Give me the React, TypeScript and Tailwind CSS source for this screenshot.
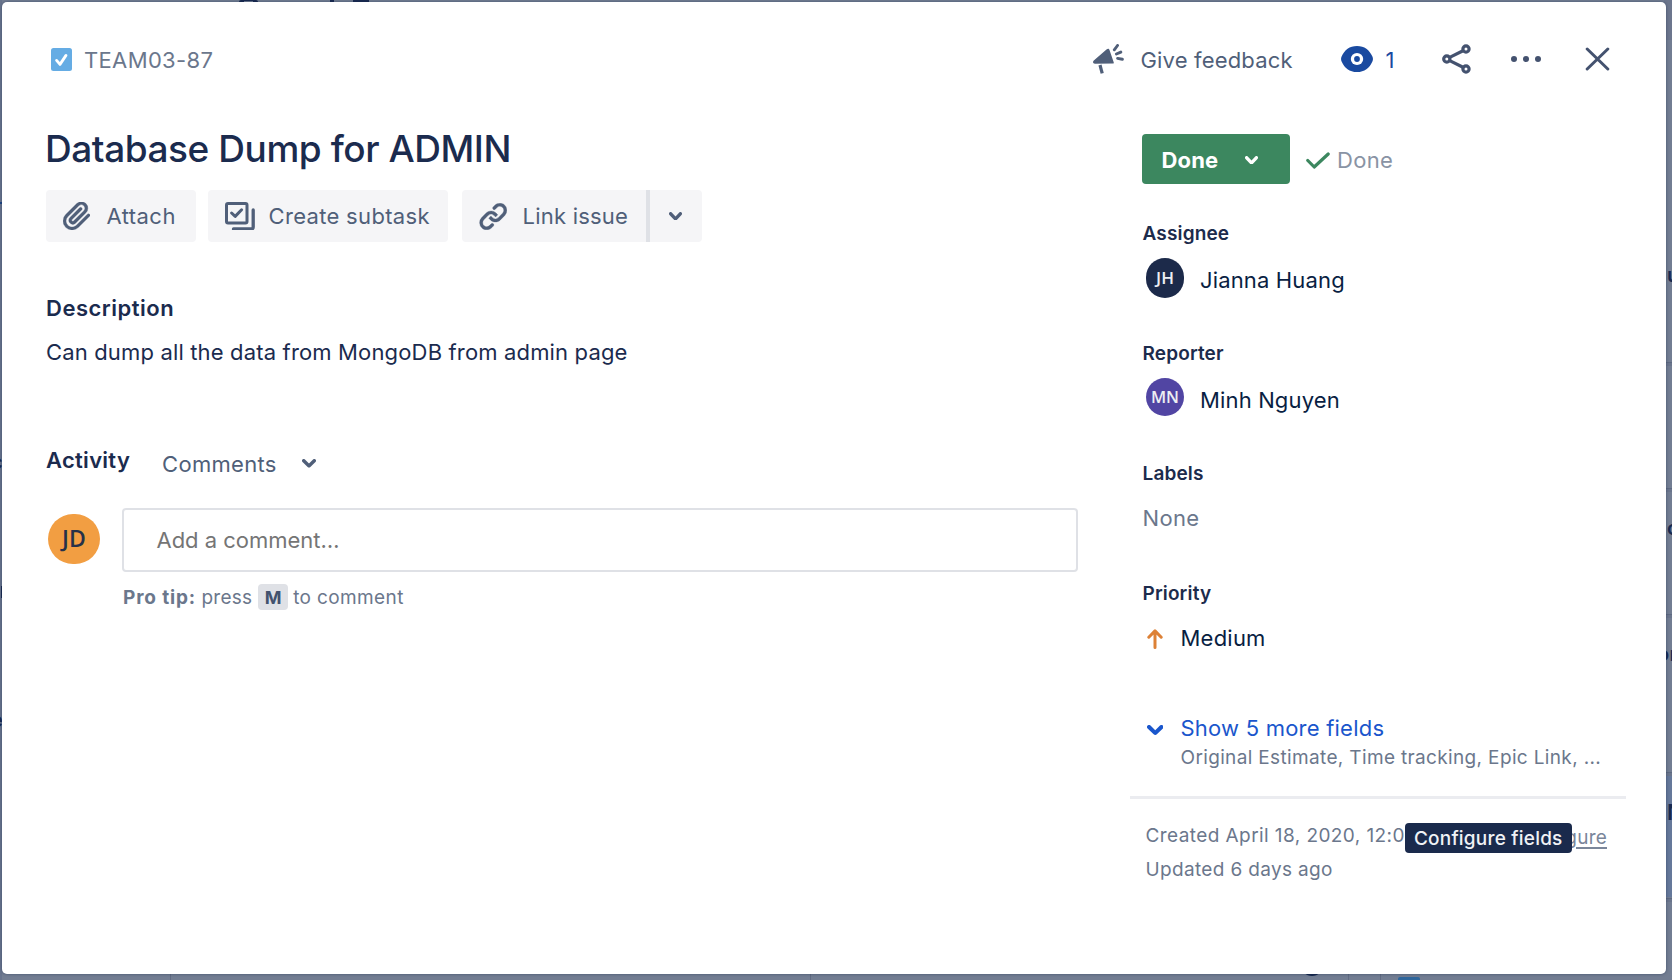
import type { ReactNode } from "react";

type IconProps = { box: string; className: string; children: ReactNode };

function Icon({ box, className, children }: IconProps) {
  return (
    <svg viewBox={box} preserveAspectRatio="none" fill="currentColor" className={`block shrink-0 ${className}`}>
      {children}
    </svg>
  );
}

function Chevron({ className }: { className: string }) {
  return (
    <Icon box="8 10 8 5" className={className}>
      <path d="M8.292 10.293a1.009 1.009 0 0 0 0 1.419l2.939 2.965c.218.215.5.322.779.322s.556-.107.769-.322l2.93-2.955a1.01 1.01 0 0 0 0-1.419.987.987 0 0 0-1.406 0l-2.298 2.317-2.307-2.327a.99.99 0 0 0-1.406 0z" />
    </Icon>
  );
}

function PaperclipIcon() {
  return (
    <Icon box="3 3.2 17.45 17.8" className="h-7 w-[27px]">
      <path
        stroke="currentColor"
        strokeWidth="0.2"
        d="M11.643 17.965c-1.53 1.495-4.016 1.496-5.542.004a3.773 3.773 0 0 1 .002-5.412l7.147-6.985a2.316 2.316 0 0 1 3.22.004c.893.873.895 2.282.004 3.153l-6.703 6.55a.653.653 0 0 1-.914-.008.62.62 0 0 1 0-.902l6.229-6.087a.941.941 0 0 0 0-1.353.995.995 0 0 0-1.384 0l-6.23 6.087a2.502 2.502 0 0 0 0 3.607 2.643 2.643 0 0 0 3.683.009l6.703-6.55a4.152 4.152 0 0 0-.003-5.859 4.306 4.306 0 0 0-5.986.003L4.72 11.205a5.653 5.653 0 0 0-.002 8.118 5.932 5.932 0 0 0 8.31-.003l7.147-6.985a.94.94 0 0 0 0-1.352.995.995 0 0 0-1.384 0l-7.149 6.982z"
      />
    </Icon>
  );
}

function SubtaskIcon() {
  return (
    <Icon box="0 0 30 28.5" className="h-[28.5px] w-[30px]">
      <g fill="none" stroke="currentColor" strokeWidth="3" strokeLinejoin="round" strokeLinecap="round">
        <rect x="1.5" y="1.5" width="20.5" height="19.5" rx="1.5" />
        <path d="M6.6 11l3.6 3.4 6.4-6.6" />
        <path d="M28.2 8v17q0 2-2 2H8.5" strokeWidth="3.3" />
      </g>
    </Icon>
  );
}

function LinkIcon() {
  return (
    <Icon box="2.6 3.9 18.8 17.2" className="h-[27px] w-[28.5px]">
      <g stroke="currentColor" strokeWidth="0.2">
        <path d="M12.856 5.457l-.937.92a1.002 1.002 0 0 0 0 1.437 1.047 1.047 0 0 0 1.463 0l.984-.966c.967-.95 2.542-1.135 3.602-.288a2.54 2.54 0 0 1 .203 3.81l-2.903 2.852a2.646 2.646 0 0 1-3.696 0l-1.11-1.09L9 13.57l1.108 1.089c1.822 1.788 4.802 1.788 6.622 0l2.905-2.852a4.558 4.558 0 0 0-.357-6.82c-1.893-1.517-4.695-1.226-6.422.47" />
        <path d="M11.144 19.543l.937-.92a1.002 1.002 0 0 0 0-1.437 1.047 1.047 0 0 0-1.462 0l-.985.966c-.967.95-2.542 1.135-3.602.288a2.54 2.54 0 0 1-.203-3.81l2.903-2.852a2.646 2.646 0 0 1 3.696 0l1.11 1.09L15 11.43l-1.108-1.089c-1.822-1.788-4.802-1.788-6.622 0l-2.905 2.852a4.558 4.558 0 0 0 .357 6.82c1.893 1.517 4.695 1.226 6.422-.47" />
      </g>
    </Icon>
  );
}

function MegaphoneIcon() {
  return (
    <Icon box="0 0 31 30" className="mb-[2px] h-[30px] w-[31px]">
      <path d="M13.800 5.200c1-1 2.300-.6 2.700.7l4.200 12.300c.3.900-.2 1.400-1 1.400L2 19.800C0 19.800-.6 17.700.8 16.500z" />
      <g fill="none" stroke="currentColor" strokeWidth="2.9" strokeLinecap="round">
        <path d="M7 21l2.200 8.300" strokeWidth="3.2" strokeLinecap="butt" />
        <path d="M21.300 5.800l3.200-4.300M23.400 10l4.400-1.900M24.600 14.400l4.800.9" />
      </g>
    </Icon>
  );
}

function EyeIcon() {
  return (
    <Icon box="0 0 32 26" className="mb-[2px] h-[26px] w-8 text-[#1a4aa0]">
      <path d="M16 0C8.500 0 3.500 4 .6 10.600Q-.5 13 .6 15.400C3.500 22 8.500 26 16 26s12.500-4 15.400-10.600q1.100-2.400 0-4.800C28.500 4 23.500 0 16 0z" />
      <ellipse cx="16" cy="13" rx="6.200" ry="5.900" fill="#fff" />
      <circle cx="16" cy="13" r="2.900" />
    </Icon>
  );
}

function ShareIcon() {
  return (
    <Icon box="0 0 29 30" className="mb-[2px] h-[30px] w-[29px]">
      <g fill="none" stroke="currentColor" strokeWidth="3.2">
        <circle cx="4.800" cy="15" r="3.100" />
        <circle cx="24" cy="5" r="3.100" />
        <circle cx="24" cy="25" r="3.100" />
        <path d="M7.700 13.400L21 6.700M7.700 16.600L21 23.300" />
      </g>
    </Icon>
  );
}

function Field({ label, children }: { label: string; children: ReactNode }) {
  return (
    <div className="h-[120px] pl-[12.500px]">
      <h3 className="text-[19px] leading-[26px] font-semibold tracking-[0.150px] text-[#1c2b4c]">{label}</h3>
      {children}
    </div>
  );
}

const sideRules = ["top-[362px]", "top-[488px]", "top-[614px]", "top-[772px]", "top-[898px]"];
const columnEdges = ["left-[170px]", "left-[810px]", "left-[1348px]", "left-[1380px]"];

function Board() {
  return (
    <div className="absolute inset-0 overflow-hidden bg-[#727d92] font-semibold text-[#182950]">
      <div className="absolute inset-y-0 left-0 w-[2px] bg-[#68748d]" />
      <div className="absolute top-0 right-0 h-10 w-2 bg-[#6c768d]" />
      {sideRules.map((top) => (
        <div key={top} className={`absolute right-0 h-[4px] w-2 border-t border-[#5d6981] bg-[#6a758c] ${top}`} />
      ))}
      {columnEdges.map((left) => (
        <div key={left} className={`absolute bottom-0 h-[6px] w-px bg-[#616c83] ${left}`} />
      ))}
      <div className="absolute top-[776px] right-0 h-[121px] w-[6px] bg-[#65789a]" />
      <div className="absolute top-0 left-[239px] h-[2px] w-[19px] rounded-t-full border-x-[5px] border-t border-[#182950]" />
      <div className="absolute top-0 left-[330px] h-[2px] w-1 bg-[#182950]" />
      <div className="absolute top-0 left-[353px] h-[2px] w-4 bg-[#182950]" />
      <div className="absolute top-[202px] left-0 h-[2px] w-[2px] bg-[#1c4584]" />
      <div className="absolute top-[450px] left-[-9px] text-[20px] leading-6">c</div>
      <div className="absolute top-[586px] left-px h-3 w-px bg-[#182950]" />
      <div className="absolute top-[708px] left-[-9px] text-[20px] leading-6">e</div>
      <div className="absolute top-[263px] left-[1667px] text-[20px] leading-6">u</div>
      <div className="absolute top-[516px] left-[1667px] text-[20px] leading-6">c</div>
      <div className="absolute top-[642px] left-[1657px] text-[20px] leading-6">or</div>
      <div className="absolute top-[800px] left-[1667px] text-[22px] leading-6">N</div>
      <div className="absolute top-[954px] left-[1301px] size-[22px] rounded-full bg-[#14264c]" />
      <div className="absolute top-[977px] left-[1398px] h-3 w-[22px] rounded-[2px] bg-[#2f669c]" />
    </div>
  );
}

export default function App() {
  return (
    <div className="relative h-[980px] w-[1672px] overflow-hidden font-[Inter,sans-serif] text-[22px] leading-7 tracking-[0.220px]">
      <Board />
      <div className="relative mt-[2px] ml-[2px] flex h-[972px] w-[1664px] flex-col rounded-[5px] bg-white shadow-[0_0_3px_rgba(20,35,70,0.5)]">
        <header className="mt-[38px] flex h-10 shrink-0 items-center text-[#505f79]">
          <div className="flex w-[1091px] items-center pl-[49px]">
            <Icon box="0 0 21 23" className="mr-[12px] mb-[2px] h-[23px] w-[21px] text-[#65ace4]">
              <rect width="21" height="23" rx="2.500" />
              <path d="M5.600 12.400l3.400 4 6-9" fill="none" stroke="#fff" strokeWidth="2.800" strokeLinecap="round" strokeLinejoin="round" />
            </Icon>
            <span className="tracking-[0.350px] text-[#6b778c]">TEAM03-87</span>
          </div>
          <MegaphoneIcon />
          <span className="ml-[16.500px] w-[200px] tracking-[0.170px]">Give feedback</span>
          <div className="flex w-[101.500px] items-center gap-[13px]">
            <EyeIcon />
            <span className="text-[#1a4aa0]">1</span>
          </div>
          <div className="w-[69px] text-[#44526f]">
            <ShareIcon />
          </div>
          <Icon box="0 0 30 6" className="mr-[44px] mb-[2px] h-[6px] w-[30px] text-[#44526f]">
            <circle cx="3" cy="3" r="3" />
            <circle cx="15" cy="3" r="3" />
            <circle cx="27" cy="3" r="3" />
          </Icon>
          <Icon box="0 0 25 24" className="mb-[2px] h-6 w-[25px] text-[#44526f]">
            <path d="M2.200 2l20.600 20M22.800 2L2.200 22" fill="none" stroke="currentColor" strokeWidth="3" strokeLinecap="round" />
          </Icon>
        </header>

        <div className="flex">
          <main className="ml-11 w-[1032px]">
            <h1 className="mt-[46px] ml-[-1px] text-[37px] leading-[46px] font-medium tracking-[-0.440px] text-[#1b2b4e]">Database Dump for ADMIN</h1>

            <div className="mt-[18px] flex h-[52px] text-[#505f79]">
              <button className="mr-3 flex w-[150px] items-center rounded-[4px] bg-[#f5f5f7] pl-[16.500px]">
                <PaperclipIcon />
                <span className="ml-[17px] tracking-[0.450px]">Attach</span>
              </button>
              <button className="mr-[14px] flex w-[240px] items-center rounded-[4px] bg-[#f5f5f7] pl-[17px]">
                <SubtaskIcon />
                <span className="ml-[13.500px] tracking-[0.320px]">Create subtask</span>
              </button>
              <button className="flex w-[184px] items-center rounded-l-[4px] bg-[#f5f5f7] pl-[16.500px]">
                <LinkIcon />
                <span className="ml-[15.500px]">Link issue</span>
              </button>
              <span className="w-[4px] bg-[#dfe1e6]" />
              <button className="flex w-[52px] items-center rounded-r-[4px] bg-[#f5f5f7] pl-[18.500px]">
                <Chevron className="h-[8.500px] w-[13px]" />
              </button>
            </div>

            <h2 className="mt-[52px] font-semibold tracking-[0.500px] text-[#1b2b4e]">Description</h2>
            <p className="mt-4 tracking-[0.158px] text-[#1b2b4e]">Can dump all the data from MongoDB from admin page</p>

            <div className="mt-20 flex h-8 items-start">
              <h2 className="w-[116px] font-semibold tracking-[0.280px] text-[#1b2b4e]">Activity</h2>
              <button className="mt-1 flex items-center text-[#505f79]">
                <span className="tracking-[0.310px]">Comments</span>
                <Chevron className="mb-px ml-[25.500px] h-[8.500px] w-[14px]" />
              </button>
            </div>

            <div className="mt-[30px] flex items-start">
              <div className="mt-[6px] ml-[2px] flex h-[50px] w-[52px] items-center justify-center rounded-full bg-[#f29e42] font-['Open_Sans',sans-serif] text-[23px] font-semibold tracking-normal text-[#263149]">
                <span className="pb-[2px]">JD</span>
              </div>
              <div className="ml-[22px] flex-1">
                <div className="flex h-16 items-center rounded-[4px] border-2 border-[#dfe1e6] pl-[32.500px] tracking-[-0.020px] text-[#757575]">Add a comment…</div>
                <div className="mt-3 ml-px flex h-[26px] items-center text-[19px] leading-[26px] text-[#6b778c]">
                  <b className="w-[78.500px] pt-[2px] font-bold tracking-[0.850px]">Pro tip:</b>
                  <span className="pt-[2px]">press</span>
                  <kbd className="mr-[5px] ml-[6px] flex h-[26px] w-[30px] items-center justify-center rounded-[4px] bg-[#dfe1e6] pt-px font-[Inter,sans-serif] text-[18px] font-bold text-[#42526e]">M</kbd>
                  <span className="pt-[2px] tracking-[0.370px]">to comment</span>
                </div>
              </div>
            </div>
          </main>

          <aside className="ml-[52px] w-[496px]">
            <div className="mt-[54px] flex h-[50px] items-center pl-3">
              <button className="flex h-[50px] w-[148px] items-center rounded-[4px] bg-[#3c875f] pl-[19.500px] text-white">
                <span className="pt-px font-bold tracking-[0.140px]">Done</span>
                <Chevron className="mt-[2px] ml-[26.500px] h-[8.500px] w-[13px]" />
              </button>
              <Icon box="0 0 24 17" className="mt-[3px] ml-4 h-[17px] w-6 text-[#3c875f]">
                <path d="M1.800 8.500l6.400 6.500L22.200 2" fill="none" stroke="currentColor" strokeWidth="3.200" strokeLinecap="round" strokeLinejoin="round" />
              </Icon>
              <span className="ml-[7px] pt-px tracking-[0.310px] text-[#8993a4]">Done</span>
            </div>

            <div className="mt-[37px]">
              <Field label="Assignee">
                <div className="mt-[11px] flex h-10 items-start pl-[3.500px]">
                  <div className="flex h-10 w-[38px] items-center justify-center rounded-full bg-[#1c2a4a] font-['Open_Sans',sans-serif] text-[17px] font-semibold tracking-normal text-[#eceef2]">JH</div>
                  <span className="mt-2 ml-4 tracking-[0.150px] text-[#091e42]">Jianna Huang</span>
                </div>
              </Field>
              <Field label="Reporter">
                <div className="mt-[11px] flex h-10 items-start pl-[3.500px]">
                  <div className="flex h-[38px] w-[38px] items-center justify-center rounded-full bg-[#5145a3] font-['Open_Sans',sans-serif] text-[16.500px] font-semibold tracking-normal text-[#eceef2]">MN</div>
                  <span className="mt-2 ml-4 tracking-[0.150px] text-[#091e42]">Minh Nguyen</span>
                </div>
              </Field>
              <Field label="Labels">
                <p className="mt-[17px] tracking-[0.350px] text-[#6b778c]">None</p>
              </Field>
              <Field label="Priority">
                <div className="mt-[17px] flex items-center pl-[4.500px]">
                  <Icon box="0 0 16 20" className="mt-px h-5 w-4 text-[#dd8136]">
                    <path d="M8 18.500V2M1.800 8.200L8 1.900l6.200 6.300" fill="none" stroke="currentColor" strokeWidth="3" strokeLinecap="round" strokeLinejoin="round" />
                  </Icon>
                  <span className="ml-[17.500px] text-[#091e42]">Medium</span>
                </div>
              </Field>
            </div>

            <div className="mt-[13px] flex h-[82px] items-start pl-[16.500px]">
              <Chevron className="mt-[11px] h-[10px] w-[16.500px] text-[#1a56cc]" />
              <div className="ml-[17.500px]">
                <p className="text-[#1a56cc]">Show 5 more fields</p>
                <p className="mt-[3px] text-[19px] leading-[26px] tracking-[0.350px] whitespace-nowrap text-[#6b778c]">Original Estimate, Time tracking, Epic Link, ...</p>
              </div>
            </div>
            <div className="h-[3px] bg-[#ebecf0]" />

            <footer className="relative mt-6 pl-[15.500px] text-[19px] leading-[26px] text-[#6b778c]">
              <div className="flex h-8 justify-between pr-[19px]">
                <p className="tracking-[0.420px] whitespace-nowrap">Created April 18, 2020, 12:0</p>
                <a className="mt-[2px] text-[#7a869a] underline decoration-2 underline-offset-[3px]">Configure</a>
              </div>
              <p className="mt-[2px] tracking-[0.340px]">Updated 6 days ago</p>
              <div className="absolute top-0 left-[274.500px] flex h-[30px] w-[167.500px] items-center justify-center rounded-[4px] bg-[#1a2a4c] pt-[2px] text-[19px] font-medium tracking-[0.210px] text-[#f0f2f6]">Configure fields</div>
            </footer>
          </aside>
        </div>
      </div>
    </div>
  );
}
